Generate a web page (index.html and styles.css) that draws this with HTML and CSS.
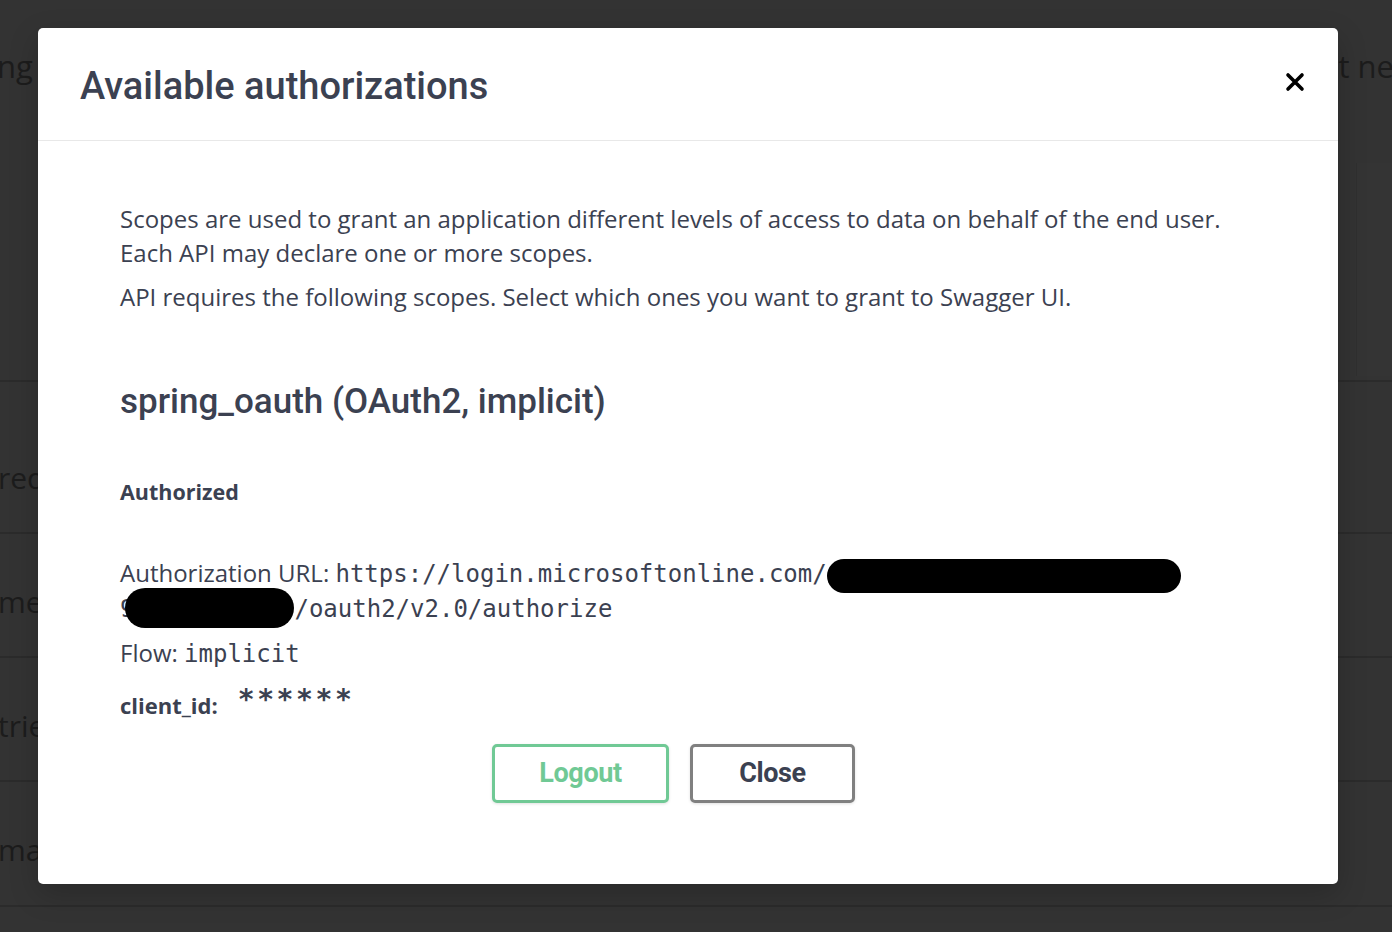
FILE: index.html
```html
<!DOCTYPE html>
<html lang="en">
<head>
<meta charset="utf-8">
<title>Available authorizations</title>
<link rel="stylesheet" href="styles.css">
</head>
<body>
<div class="bg">
  <div class="bg-top">
    <div class="bg-head">
      <span class="bg-word bg-left">ng</span>
      <span class="bg-word bg-right">t ne</span>
    </div>
    <div class="bg-box"></div>
  </div>
  <div class="bg-row bg-row-first"><span class="bg-word">red</span></div>
  <div class="bg-row"><span class="bg-word">me</span></div>
  <div class="bg-row"><span class="bg-word">trie</span></div>
  <div class="bg-row bg-row-4"><span class="bg-word">mat</span></div>
  <div class="bg-row bg-row-last"></div>
</div>

<div class="modal">
  <div class="modal-header">
    <h3 class="modal-title">Available authorizations</h3>
    <button class="close-btn" aria-label="Close">
      <svg width="20" height="20" viewBox="0 0 20 20"><path d="M3 3 L17 17 M17 3 L3 17" stroke="#000" stroke-width="3.6" stroke-linecap="round" fill="none"/></svg>
    </button>
  </div>
  <div class="modal-body">
    <div class="scopes-desc">
      <p>Scopes are used to grant an application different levels of access to data on behalf of the end user.<br>Each API may declare one or more scopes.</p>
      <p>API requires the following scopes. Select which ones you want to grant to Swagger UI.</p>
    </div>
    <h4 class="scheme-title">spring_oauth (OAuth2, implicit)</h4>
    <h6 class="authorized">Authorized</h6>
    <p class="auth-url">Authorization URL: <code>https://login.microsoftonline.com/</code><span class="redact redact-1"></span><br><code>9</code><span class="redact redact-2"></span><code>/oauth2/v2.0/authorize</code></p>
    <p class="flow">Flow: <code>implicit</code></p>
    <div class="client-row">
      <label class="client-label">client_id:</label>
      <code class="client-val">******</code>
    </div>
    <div class="btn-wrap">
      <button class="btn btn-logout">Logout</button>
      <button class="btn btn-close">Close</button>
    </div>
  </div>
</div>
</body>
</html>
```

FILE: styles.css
```css
html, body {
  margin: 0;
  padding: 0;
}
body {
  width: 1392px;
  height: 932px;
  overflow: hidden;
  background: #333333;
  font-family: "Open Sans", "Noto Sans", sans-serif;
  position: relative;
}

/* background page (dimmed) */
.bg {
  display: flex;
  flex-direction: column;
  height: 932px;
}
.bg > div {
  flex-shrink: 0;
}
.bg-top {
  height: 380px;
  overflow: hidden;
}
.bg-head {
  display: flex;
  justify-content: space-between;
  padding-top: 44px;
}
.bg-word {
  font-family: "Open Sans", sans-serif;
  font-size: 31px;
  line-height: 44px;
  color: #1c1c1c;
}
.bg-left {
  margin-left: -3px;
}
.bg-right {
  margin-right: -2px;
}
.bg-box {
  margin: 75px 0 0 1356px;
  height: 213px;
  border-left: 1px solid #2f2f2f;
  background: #343434;
}
.bg-row {
  height: 124px;
  border-top: 2px solid #2b2b2b;
  box-sizing: border-box;
  padding-top: 46px;
  display: flex;
}
.bg-row .bg-word {
  font-size: 30px;
  margin-left: -2px;
}
.bg-row-first {
  height: 152px;
  padding-top: 74px;
}
.bg-row-4 {
  height: 125px;
}
.bg-row-last {
  flex: 1;
}

/* modal */
.modal {
  position: absolute;
  left: 38px;
  top: 28px;
  width: 1300px;
  height: 856px;
  background: #fff;
  border-radius: 5px;
  box-shadow: 0 10px 30px rgba(0,0,0,.2);
  display: flex;
  flex-direction: column;
  color: #3b4151;
}
.modal-header {
  height: 112px;
  border-bottom: 1px solid #e8e8e8;
  display: flex;
  align-items: center;
  justify-content: space-between;
  padding: 0 33px 0 42px;
}
.modal-title {
  margin: 0;
  font-family: "Roboto", "Liberation Sans", sans-serif;
  font-weight: 500;
  font-size: 38px;
  letter-spacing: 0;
  color: #3b4151;
  padding-top: 4px;
}
.close-btn {
  background: none;
  border: 0;
  padding: 0;
  width: 20px;
  height: 20px;
  margin-top: -4px;
  display: flex;
  cursor: pointer;
}

.modal-body {
  padding: 61px 82px 0 82px;
  display: flex;
  flex-direction: column;
}
.scopes-desc p {
  margin: 0 0 10px;
  font-size: 24px;
  line-height: 34px;
  color: #3b4151;
}
.scheme-title {
  margin: 56px 0 0;
  font-family: "Roboto", "Liberation Sans", sans-serif;
  font-weight: 500;
  font-size: 35px;
  line-height: 44px;
  letter-spacing: 0;
}
.authorized {
  margin: 51px 0 0;
  font-size: 21.5px;
  line-height: 34px;
  font-weight: 700;
}
.auth-url, .flow {
  margin: 0;
  font-size: 24px;
  line-height: 34px;
  font-weight: 400;
}
.auth-url {
  margin-top: 47px;
}
.flow {
  margin-top: 8px;
}
code {
  font-family: "DejaVu Sans Mono", "Liberation Mono", monospace;
  font-size: 24px;
  letter-spacing: 0;
  font-weight: 400;
  color: #3b4151;
}
.redact {
  display: inline-block;
  background: #000;
  vertical-align: middle;
}
.redact-1 {
  width: 354px;
  height: 34px;
  border-radius: 17px;
  margin-top: -4px;
  position: relative;
  top: 2px;
}
.redact-2 {
  width: 169px;
  height: 40px;
  border-radius: 20px;
  margin-left: -9px;
  margin-top: -6px;
}
.client-row {
  margin-top: 16px;
  display: flex;
  align-items: baseline;
  gap: 20px;
  height: 36px;
}
.client-label {
  font-size: 22px;
  font-weight: 700;
  line-height: 36px;
}
.client-val {
  font-size: 28px;
  font-weight: 700;
  letter-spacing: 2.6px;
  position: relative;
  top: -5px;
}
.btn-wrap {
  display: flex;
  justify-content: center;
  gap: 21px;
  margin-top: 21px;
  padding-right: 29px;
}
.btn {
  height: 59px;
  box-sizing: border-box;
  border-radius: 5px;
  background: #fff;
  border: 3px solid #808080;
  font-family: "Roboto", "Liberation Sans", sans-serif;
  font-weight: 700;
  font-size: 27px;
  letter-spacing: -0.4px;
  box-shadow: 0 1px 3px rgba(0,0,0,.12);
  padding: 0;
  cursor: pointer;
}
.btn-logout {
  width: 177px;
  border-color: #70c995;
  color: #70c995;
}
.btn-close {
  width: 165px;
  color: #3b4151;
}
```
